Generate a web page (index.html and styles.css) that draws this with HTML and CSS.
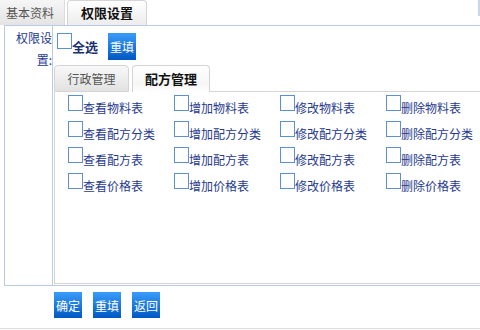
FILE: index.html
```html
<!DOCTYPE html>
<html lang="zh-CN">
<head>
    <meta charset="UTF-8">
    <title>权限设置</title>
    <link rel="stylesheet" href="styles.css">
</head>
<body>
    <!-- Pestañas superiores -->
    <div class="tabbar">
        <div class="tab">基本资料</div>
        <div class="tab tab-on">权限设置</div>
        <div class="edge"></div>
    </div>

    <!-- Formulario de permisos -->
    <div class="form">
        <div class="label">权限设置:</div>
        <div class="field">
            <div class="toolbar">
                <label class="check check-all"><span class="box"></span><span class="txt">全选</span></label>
                <button class="btn">重填</button>
            </div>
            <div class="panel">
                <div class="subtabs">
                    <div class="subtab">行政管理</div>
                    <div class="subtab subtab-on">配方管理</div>
                    <div class="subtabs-rest"></div>
                </div>
                <div class="panel-body">
                    <div class="grid">
                        <label class="check"><span class="box"></span><span class="txt">查看物料表</span></label>
                        <label class="check"><span class="box"></span><span class="txt">增加物料表</span></label>
                        <label class="check"><span class="box"></span><span class="txt">修改物料表</span></label>
                        <label class="check"><span class="box"></span><span class="txt">删除物料表</span></label>
                        <label class="check"><span class="box"></span><span class="txt">查看配方分类</span></label>
                        <label class="check"><span class="box"></span><span class="txt">增加配方分类</span></label>
                        <label class="check"><span class="box"></span><span class="txt">修改配方分类</span></label>
                        <label class="check"><span class="box"></span><span class="txt">删除配方分类</span></label>
                        <label class="check"><span class="box"></span><span class="txt">查看配方表</span></label>
                        <label class="check"><span class="box"></span><span class="txt">增加配方表</span></label>
                        <label class="check"><span class="box"></span><span class="txt">修改配方表</span></label>
                        <label class="check"><span class="box"></span><span class="txt">删除配方表</span></label>
                        <label class="check"><span class="box"></span><span class="txt">查看价格表</span></label>
                        <label class="check"><span class="box"></span><span class="txt">增加价格表</span></label>
                        <label class="check"><span class="box"></span><span class="txt">修改价格表</span></label>
                        <label class="check"><span class="box"></span><span class="txt">删除价格表</span></label>
                    </div>
                </div>
            </div>
        </div>
    </div>

    <!-- Botones -->
    <div class="actions">
        <button class="btn">确定</button>
        <button class="btn">重填</button>
        <button class="btn">返回</button>
    </div>
</body>
</html>
```

FILE: styles.css
```css
body {
    margin: 0;
    width: 480px;
    height: 330px;
    overflow: hidden;
    font-family: "Noto Sans CJK SC", "Noto Sans", sans-serif;
    font-size: 12px;
    background: #fff;
}
.tabbar {
    display: flex;
    height: 25px;
}
.tab {
    width: 65px;
    padding-left: 6px;
    box-sizing: border-box;
    border-right: 1px solid #dcdcdc;
    background: linear-gradient(#f6f6f6, #e4e4e4);
    color: #555;
    line-height: 25px;
}
.tab-on {
    width: 80px;
    margin-left: 2px;
    padding-left: 0;
    border: 1px solid #d4d4d4;
    border-bottom: none;
    border-radius: 4px 4px 0 0;
    background: linear-gradient(#fff, #ececec);
    color: #111;
    font-size: 13px;
    font-weight: bold;
    text-align: center;
    line-height: 24px;
}
.edge {
    margin-left: auto;
    width: 2px;
    height: 16px;
    background: #c8d7ec;
}
.form {
    display: flex;
    width: 500px;
    height: 261px;
    margin-left: 4px;
    box-sizing: border-box;
    border: 1px solid #b8cce4;
}
.label {
    width: 48px;
    padding: 1px 0 0 8px;
    box-sizing: border-box;
    border-right: 1px solid #b8cce4;
    text-align: right;
    line-height: 22px;
    color: #1f3a8f;
}
.field {
    flex: 1;
    display: flex;
    flex-direction: column;
    padding-left: 1px;
}
.toolbar {
    display: flex;
    align-items: flex-start;
    padding: 7px 0 0 3px;
}
.check {
    display: flex;
    align-items: flex-start;
    height: 26px;
    color: #1f3a8f;
}
.box {
    width: 15px;
    height: 16px;
    box-sizing: border-box;
    border: 1px solid #5b8fd6;
    background: #fff;
}
.txt {
    margin-top: 6px;
    line-height: 14px;
}
.check-all {
    color: #1a2f6e;
    font-size: 13px;
    font-weight: bold;
}
.check-all .txt {
    margin-top: 7px;
}
.btn {
    width: 28px;
    height: 26px;
    padding: 0;
    border: none;
    background: linear-gradient(#3a9cfa, #0058c2);
    color: #fff;
    font-family: "Noto Sans CJK SC", sans-serif;
    font-size: 12px;
    cursor: pointer;
}
.toolbar .btn {
    margin-left: 10px;
    height: 27px;
}
.panel {
    flex: 1;
    display: flex;
    flex-direction: column;
    margin: 5px 0 1px;
}
.subtabs {
    display: flex;
    height: 27px;
}
.subtab {
    width: 75px;
    box-sizing: border-box;
    border: 1px solid #d4d4d4;
    border-radius: 4px 4px 0 0;
    background: linear-gradient(#f8f8f8, #e2e2e2);
    color: #555;
    text-align: center;
    line-height: 25px;
}
.subtab-on {
    width: 78px;
    margin-left: 3px;
    border-bottom: none;
    background: linear-gradient(#fff, #f6f6f6 70%, #fff);
    color: #111;
    font-size: 13px;
    font-weight: bold;
}
.subtabs-rest {
    flex: 1;
    border-bottom: 1px solid #d4d4d4;
}
.panel-body {
    flex: 1;
    border: 1px solid #d4d4d4;
    border-top: none;
    border-right: none;
    padding: 3px 0 0 13px;
}
.grid {
    display: grid;
    grid-template-columns: repeat(4, 106px);
}
.actions {
    display: flex;
    gap: 11px;
    padding: 6px 0 10px 54px;
    border-bottom: 1px solid #dcdcdc;
}
```
